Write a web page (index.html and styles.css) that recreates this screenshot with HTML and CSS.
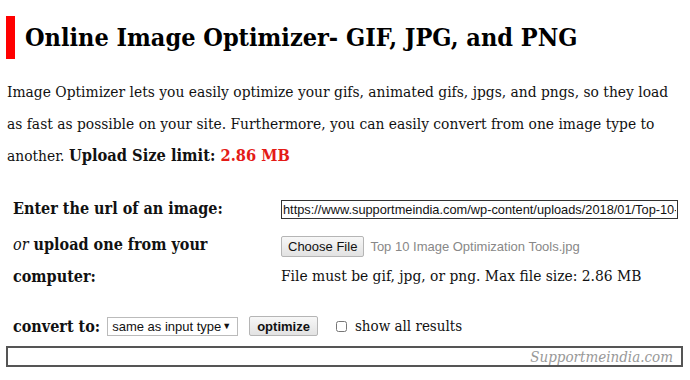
FILE: index.html
```html
<!DOCTYPE html>
<html lang="en">

<head>
    <meta charset="UTF-8">
    <title>Online Image Optimizer</title>
    <link rel="stylesheet" href="styles.css">
</head>

<body>
    <div class="page">
        <h1 class="title">Online Image Optimizer- GIF, JPG, and PNG</h1>
        <p class="intro">Image Optimizer lets you easily optimize your gifs, animated gifs, jpgs, and pngs, so they load as fast as possible on your site. Furthermore, you can easily convert from one image type to another. <b>Upload Size limit: <span class="limit">2.86 MB</span></b></p>

        <form class="form">
            <div class="row">
                <label class="label" for="url">Enter the url of an image:</label>
                <div class="field">
                    <input id="url" class="url" type="text" value="https://www.supportmeindia.com/wp-content/uploads/2018/01/Top-10-Image-Optimization-Tools.jpg">
                </div>
            </div>
            <div class="row row-upload">
                <div class="label"><i class="or">or</i> upload one from your computer:</div>
                <div class="field">
                    <div class="file">
                        <button type="button" class="btn">Choose File</button>
                        <span class="file-name">Top 10 Image Optimization Tools.jpg</span>
                    </div>
                    <div class="note">File must be gif, jpg, or png. Max file size: 2.86 MB</div>
                </div>
            </div>
            <div class="convert">
                <b>convert to:</b>
                <span class="select">same as input type</span>
                <button type="button" class="btn btn-go">optimize</button>
                <label class="check"><input type="checkbox"> show all results</label>
            </div>
        </form>
        <div class="result"><span class="watermark">Supportmeindia.com</span></div>
    </div>
</body>

</html>
```

FILE: styles.css
```css
* {
    margin: 0;
    padding: 0;
    box-sizing: border-box;
}

body {
    background: #fff;
    color: #111;
    font-family: "DejaVu Serif Condensed", "DejaVu Serif", serif;
    font-size: 15.4px;
}

.page {
    padding: 16px 6px 0 6px;
}

.title {
    border-left: 9px solid #f00;
    padding-left: 10px;
    font-size: 25px;
    line-height: 43px;
    color: #000;
}

.intro {
    margin-top: 17px;
    padding-left: 1px;
    line-height: 32px;
    width: 670px;
}

.intro b {
    font-size: 16.3px;
    line-height: 1;
}

.limit {
    color: #e41b17;
}

.form {
    margin-top: 21px;
    padding-left: 7px;
}

.row {
    display: grid;
    grid-template-columns: 268px 1fr;
    align-items: start;
}

.label {
    font-weight: bold;
    font-size: 16px;
    line-height: 32px;
    width: 230px;
}

.or {
    font-weight: normal;
}

.field {
    padding-top: 7px;
}

.url {
    display: block;
    width: 397px;
    height: 19px;
    border: 1px solid #333;
    font-family: "Liberation Sans", Arial, sans-serif;
    font-size: 12.8px;
    color: #111;
    padding: 0 1px;
}

.row-upload {
    margin-top: 4px;
}

.file {
    display: flex;
    align-items: center;
    gap: 6px;
    height: 21px;
}

.btn {
    font-family: "Liberation Sans", Arial, sans-serif;
    font-size: 13px;
    color: #111;
    background: linear-gradient(#f7f7f7, #e2e2e2);
    border: 1px solid #b5b5b5;
    border-radius: 2px;
    padding: 0 6px;
    height: 21px;
}

.file-name {
    font-family: "Liberation Sans", Arial, sans-serif;
    font-size: 13px;
    color: #888;
}

.note {
    margin-top: 10px;
}

.convert {
    display: flex;
    align-items: center;
    margin-top: 23px;
    font-size: 16px;
    height: 20px;
}

.select {
    position: relative;
    margin-left: 7px;
    width: 131px;
    height: 19px;
    border: 1px solid #bbb;
    font-family: "Liberation Sans", Arial, sans-serif;
    font-size: 13px;
    line-height: 17px;
    padding-left: 4px;
}

.select::after {
    content: "\25BC";
    position: absolute;
    right: 6px;
    top: 0;
    font-size: 9px;
}

.btn-go {
    margin-left: 11px;
    font-weight: bold;
    padding: 0 7px;
    height: 20px;
}

.check {
    display: flex;
    align-items: center;
    gap: 8px;
    margin-left: 18px;
    font-size: 15px;
}

.check input {
    width: 11px;
    height: 11px;
    margin: 0;
}

.result {
    margin-top: 10px;
    width: 677px;
    height: 21px;
    border: 2px solid #555;
    text-align: right;
    padding-right: 8px;
}

.watermark {
    font-family: "DejaVu Serif Condensed", "DejaVu Serif", serif;
    font-style: italic;
    font-size: 15px;
    line-height: 17px;
    color: #999;
}
```
